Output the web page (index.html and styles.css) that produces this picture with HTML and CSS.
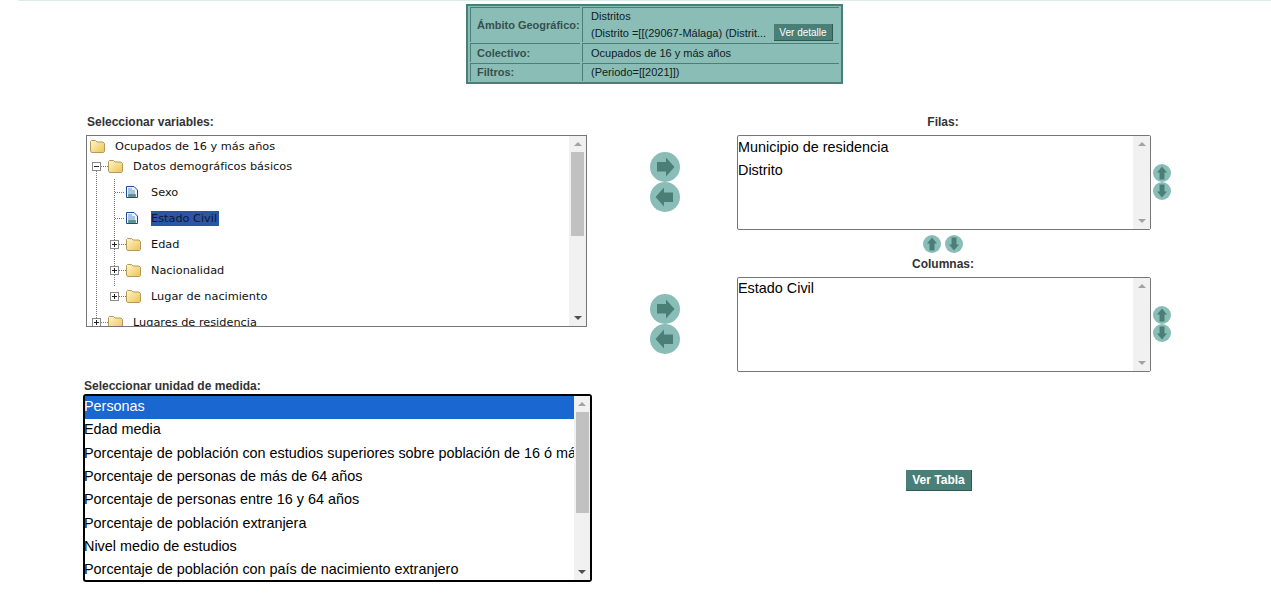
FILE: index.html
```html
<!DOCTYPE html>
<html lang="es">
<head>
    <meta charset="UTF-8">
    <meta name="viewport" content="width=device-width, initial-scale=1.0">
    <title>Seleccionar variables</title>
    <link rel="stylesheet" href="styles.css">
</head>
<body>
    <svg class="defs" width="0" height="0">
        <defs>
            <linearGradient id="grad-carpeta" x1="0" y1="0" x2="1" y2="1">
                <stop offset="0" stop-color="#fff6cc"/>
                <stop offset="1" stop-color="#efc255"/>
            </linearGradient>
            <symbol id="flecha" viewBox="0 0 30 30">
                <circle cx="15" cy="15" r="15" fill="#8abdb7"/>
                <path d="M7 10h9V5.500l8.500 9.500-8.500 9.500v-5H7z" fill="#4a7f78"/>
            </symbol>
            <symbol id="flecha-chica" viewBox="0 0 18 18">
                <circle cx="9" cy="9" r="9" fill="#8abdb7"/>
                <path d="M2.500 6.500h7V4l6 5-6 5v-2.500h-7z" fill="#4a7f78"/>
            </symbol>
            <symbol id="carpeta" viewBox="0 0 15 13">
                <path d="M.5 11V1.500l1-1h4l1.500 1.500h6l1.500 1.500v8l-1 1h-12z" fill="url(#grad-carpeta)" stroke="#b39a55"/>
            </symbol>
            <symbol id="documento" viewBox="0 0 12 12">
                <path d="M.5.500h7.500l3.500 3.500v7.500H.5z" fill="#eef4fc" stroke="#1d4a94"/>
                <path d="M2 2.500h4v1H2zM2 4.500h7v1H2zM2 6.500h7v1H2z" fill="#5f93d0"/>
                <path d="M2.500 8.500h7v2h-7z" fill="#4f9f62" stroke="#24636b" stroke-width=".5"/>
            </symbol>
        </defs>
    </svg>

    <div class="linea-superior"></div>

    <table class="resumen">
        <tr class="fila-ambito">
            <th>Ámbito Geográfico:</th>
            <td>
                <div class="resumen-linea">Distritos</div>
                <div class="resumen-ambito">
                    <span>(Distrito =[[(29067-Málaga) (Distrit...</span>
                    <button type="button" class="boton-detalle">Ver detalle</button>
                </div>
            </td>
        </tr>
        <tr class="fila-colectivo">
            <th>Colectivo:</th>
            <td>Ocupados de 16 y más años</td>
        </tr>
        <tr class="fila-filtros">
            <th>Filtros:</th>
            <td>(Periodo=[[2021]])</td>
        </tr>
    </table>

    <main class="selector">
        <section class="col-izquierda">
            <div class="titulo titulo-variables">Seleccionar variables:</div>
            <div class="arbol">
                <div class="arbol-contenido">
                    <div class="nodo nivel-0">
                        <svg class="ico-carpeta"><use href="#carpeta"/></svg>
                        <span>Ocupados de 16 y más años</span>
                    </div>
                    <div class="rama-1">
                        <div class="nodo nivel-1">
                            <span class="expansor abierto"></span><span class="guia"></span>
                            <svg class="ico-carpeta"><use href="#carpeta"/></svg>
                            <span>Datos demográficos básicos</span>
                        </div>
                        <div class="rama-2">
                            <div class="nodo nivel-2 hoja">
                                <span class="guia guia-hoja"></span>
                                <svg class="ico-doc"><use href="#documento"/></svg>
                                <span>Sexo</span>
                            </div>
                            <div class="nodo nivel-2 hoja">
                                <span class="guia guia-hoja"></span>
                                <svg class="ico-doc"><use href="#documento"/></svg>
                                <span class="marcado">Estado Civil</span>
                            </div>
                            <div class="nodo nivel-2">
                                <span class="expansor"></span><span class="guia"></span>
                                <svg class="ico-carpeta"><use href="#carpeta"/></svg>
                                <span>Edad</span>
                            </div>
                            <div class="nodo nivel-2">
                                <span class="expansor"></span><span class="guia"></span>
                                <svg class="ico-carpeta"><use href="#carpeta"/></svg>
                                <span>Nacionalidad</span>
                            </div>
                            <div class="nodo nivel-2">
                                <span class="expansor"></span><span class="guia"></span>
                                <svg class="ico-carpeta"><use href="#carpeta"/></svg>
                                <span>Lugar de nacimiento</span>
                            </div>
                        </div>
                        <div class="nodo nivel-1">
                            <span class="expansor"></span><span class="guia"></span>
                            <svg class="ico-carpeta"><use href="#carpeta"/></svg>
                            <span>Lugares de residencia</span>
                        </div>
                    </div>
                </div>
                <div class="barra">
                    <span class="barra-flecha sube"></span>
                    <span class="barra-pulgar"></span>
                    <span class="barra-flecha baja activa"></span>
                </div>
            </div>

            <div class="titulo titulo-medida">Seleccionar unidad de medida:</div>
            <div class="medidas">
                <div class="medidas-contenido">
                    <div class="opcion activa">Personas</div>
                    <div class="opcion">Edad media</div>
                    <div class="opcion">Porcentaje de población con estudios superiores sobre población de 16 ó más años</div>
                    <div class="opcion">Porcentaje de personas de más de 64 años</div>
                    <div class="opcion">Porcentaje de personas entre 16 y 64 años</div>
                    <div class="opcion">Porcentaje de población extranjera</div>
                    <div class="opcion">Nivel medio de estudios</div>
                    <div class="opcion">Porcentaje de población con país de nacimiento extranjero</div>
                </div>
                <div class="barra">
                    <span class="barra-flecha sube"></span>
                    <span class="barra-pulgar"></span>
                    <span class="barra-flecha baja activa"></span>
                </div>
            </div>
        </section>

        <section class="col-derecha">
            <div class="titulo titulo-lista">Filas:</div>
            <div class="fila-lista">
                <div class="pase">
                    <svg class="flecha-grande"><use href="#flecha"/></svg>
                    <svg class="flecha-grande izq"><use href="#flecha"/></svg>
                </div>
                <div class="lista">
                    <div class="lista-contenido">
                        <div class="opcion">Municipio de residencia</div>
                        <div class="opcion">Distrito</div>
                    </div>
                    <div class="barra">
                        <span class="barra-flecha sube"></span>
                        <span class="barra-flecha baja"></span>
                    </div>
                </div>
                <div class="orden">
                    <svg class="flecha-peque arriba"><use href="#flecha-chica"/></svg>
                    <svg class="flecha-peque abajo"><use href="#flecha-chica"/></svg>
                </div>
            </div>

            <div class="intercambio">
                <svg class="flecha-peque arriba"><use href="#flecha-chica"/></svg>
                <svg class="flecha-peque abajo"><use href="#flecha-chica"/></svg>
            </div>

            <div class="titulo titulo-lista titulo-columnas">Columnas:</div>
            <div class="fila-lista">
                <div class="pase">
                    <svg class="flecha-grande"><use href="#flecha"/></svg>
                    <svg class="flecha-grande izq"><use href="#flecha"/></svg>
                </div>
                <div class="lista lista-columnas">
                    <div class="lista-contenido">
                        <div class="opcion">Estado Civil</div>
                    </div>
                    <div class="barra">
                        <span class="barra-flecha sube"></span>
                        <span class="barra-flecha baja"></span>
                    </div>
                </div>
                <div class="orden">
                    <svg class="flecha-peque arriba"><use href="#flecha-chica"/></svg>
                    <svg class="flecha-peque abajo"><use href="#flecha-chica"/></svg>
                </div>
            </div>

            <button type="button" class="boton-tabla">Ver Tabla</button>
        </section>
    </main>
</body>
</html>
```

FILE: styles.css
```css
html,
body {
    height: 100%;
    overflow: hidden;
}

body {
    font-family: "Liberation Sans", Arial, sans-serif;
    margin: 0;
    padding: 0;
    background-color: #fff;
    color: #000;
}

.defs {
    display: block;
    height: 0;
}

.linea-superior {
    height: 1px;
    margin-left: 18px;
    background-color: #dcecea;
}

/* Cuadro resumen de arriba */
.resumen {
    width: 377px;
    margin: 3px 0 0 466px;
    border: 2px solid #4a7f78;
    border-spacing: 2px 1px;
    background-color: #8abdb6;
    font-size: 11px;
    color: #10201e;
    box-sizing: border-box;
}

.resumen tr {
    height: 18px;
}

.resumen .fila-ambito {
    height: 35px;
}

.resumen .fila-colectivo {
    height: 19px;
}

.resumen th,
.resumen td {
    padding: 0 0 0 8px;
    border-top: 1px solid #4a7f78;
    border-left: 1px solid #4a7f78;
    line-height: 16px;
    text-align: left;
}

.resumen .fila-ambito th,
.resumen .fila-ambito td {
    padding-bottom: 1px;
}

.resumen .fila-filtros th,
.resumen .fila-filtros td {
    padding-bottom: 1px;
    line-height: 15px;
}

.resumen th {
    width: 103px;
    padding-left: 6px;
    font-size: 11px;
    color: #37504d;
}

.resumen-linea {
    height: 16px;
}

.resumen-ambito {
    display: flex;
    align-items: center;
    justify-content: space-between;
    padding-right: 6px;
}

.boton-detalle {
    width: 59px;
    height: 17px;
    padding: 0;
    border: none;
    border-right: 1px solid #2e5a54;
    border-bottom: 1px solid #2e5a54;
    background-color: #4a7f78;
    color: #fff;
    font-family: inherit;
    font-size: 10px;
}

/* Zona de selección */
.selector {
    display: flex;
    margin-top: 31px;
    padding-left: 83px;
}

.col-izquierda {
    width: 509px;
    flex-shrink: 0;
}

.col-derecha {
    width: 521px;
    margin-left: 58px;
}

.titulo {
    height: 20px;
    font-size: 12px;
    font-weight: bold;
    line-height: 14px;
    color: #333;
}

.titulo-variables {
    padding-left: 4px;
}

.titulo-medida {
    height: 15px;
    margin-top: 52px;
    padding-left: 1px;
}

.titulo-lista {
    width: 414px;
    margin-left: 87px;
    padding-right: 2px;
    box-sizing: border-box;
    text-align: center;
}

.titulo-columnas {
    height: 21px;
    padding-top: 1px;
}

/* Árbol de variables */
.arbol {
    display: flex;
    width: 501px;
    height: 192px;
    margin-left: 3px;
    border: 1px solid #767676;
    box-sizing: border-box;
    font-family: "DejaVu Sans", Verdana, sans-serif;
    font-size: 11.3px;
    color: #111;
}

.arbol-contenido {
    flex: 1;
    overflow: hidden;
}

.nodo {
    display: flex;
    align-items: center;
    height: 26px;
}

.nivel-0 {
    height: 20px;
    padding-left: 3px;
}

.nivel-1 {
    padding-left: 5px;
}

.rama-1 > .nivel-1:first-child {
    height: 20px;
}

.nivel-2 {
    padding-left: 23px;
}

.hoja {
    padding-left: 28px;
}

.rama-1 {
    background: repeating-linear-gradient(#777 0 1px, transparent 1px 2px) 9px 15px / 1px 100% no-repeat;
}

.rama-2 {
    padding-top: 3px;
    background: repeating-linear-gradient(#777 0 1px, transparent 1px 2px) 27px 3px / 1px calc(100% - 25px) no-repeat;
}

.expansor {
    width: 9px;
    height: 9px;
    flex-shrink: 0;
    border: 1px solid #8a8a8a;
    box-sizing: border-box;
    background:
        linear-gradient(#222, #222) center / 5px 1px no-repeat,
        linear-gradient(#222, #222) center / 1px 5px no-repeat,
        #fff;
}

.expansor.abierto {
    background:
        linear-gradient(#222, #222) center / 5px 1px no-repeat,
        #fff;
}

.guia {
    width: 7px;
    flex-shrink: 0;
    border-top: 1px dotted #777;
}

.guia-hoja {
    width: 9px;
    margin-right: 2px;
}

.ico-carpeta {
    width: 15px;
    height: 13px;
    flex-shrink: 0;
    margin-right: 10px;
}

.ico-doc {
    width: 12px;
    height: 12px;
    flex-shrink: 0;
    margin-right: 13px;
}

.marcado {
    padding-right: 2px;
    background-color: #2b56a6;
    color: #0b1a33;
    line-height: 15px;
}

/* Listas */
.opcion {
    height: 23.33px;
    line-height: 22px;
    font-size: 14.4px;
    white-space: nowrap;
    overflow: hidden;
}

.opcion.activa {
    background-color: #1a67d2;
    color: #fff;
}

.medidas {
    display: flex;
    width: 509px;
    height: 188px;
    border: 2px solid #000;
    border-radius: 3px;
    box-sizing: border-box;
}

.medidas-contenido {
    flex: 1;
    min-width: 0;
    overflow: hidden;
    text-indent: -1px;
}

.medidas .opcion {
    line-height: 20px;
}

.medidas .barra {
    width: 16px;
}

.fila-lista {
    display: flex;
    align-items: center;
}

.pase {
    display: flex;
    flex-direction: column;
    width: 87px;
    flex-shrink: 0;
    margin-top: -1px;
}

.lista {
    display: flex;
    width: 414px;
    height: 95px;
    border: 1px solid #767676;
    border-radius: 2px;
    box-sizing: border-box;
}

.lista-contenido {
    flex: 1;
    min-width: 0;
}

.lista-columnas .opcion {
    line-height: 20px;
}

.orden {
    display: flex;
    flex-direction: column;
    margin: -1px 0 0 2px;
}

.intercambio {
    display: flex;
    gap: 4px;
    height: 26px;
    padding: 5px 0 0 273px;
    box-sizing: border-box;
}

/* Barra de scroll dibujada, el navegador no muestra la suya */
.barra {
    display: flex;
    flex-direction: column;
    justify-content: space-between;
    width: 17px;
    flex-shrink: 0;
    background-color: #f1f1f1;
}

.barra-flecha {
    display: flex;
    align-items: center;
    justify-content: center;
    height: 16px;
}

.barra-flecha::before {
    content: "";
    border-left: 4px solid transparent;
    border-right: 4px solid transparent;
}

.barra-flecha.sube::before {
    border-bottom: 4px solid #a3a3a3;
}

.barra-flecha.baja::before {
    border-top: 4px solid #a3a3a3;
}

.barra-flecha.baja.activa::before {
    border-top-color: #505050;
}

.barra-pulgar {
    width: 13px;
    margin: 0 auto auto 2px;
    background-color: #c1c1c1;
}

.arbol .barra-pulgar {
    height: 84px;
}

.medidas .barra-pulgar {
    height: 101px;
}

/* Flechas */
.flecha-grande {
    display: block;
    width: 30px;
    height: 30px;
}

.flecha-grande.izq {
    transform: rotate(180deg);
}

.flecha-peque {
    display: block;
    width: 18px;
    height: 18px;
}

.flecha-peque.arriba {
    transform: rotate(-90deg);
}

.flecha-peque.abajo {
    transform: rotate(90deg);
}

.boton-tabla {
    display: block;
    width: 66px;
    height: 21px;
    margin: 98px 0 0 256px;
    padding: 0;
    border: none;
    border-right: 1px solid #2e5a54;
    border-bottom: 1px solid #2e5a54;
    background-color: #4a7f78;
    color: #fff;
    font-family: inherit;
    font-size: 12px;
    font-weight: bold;
}
```
